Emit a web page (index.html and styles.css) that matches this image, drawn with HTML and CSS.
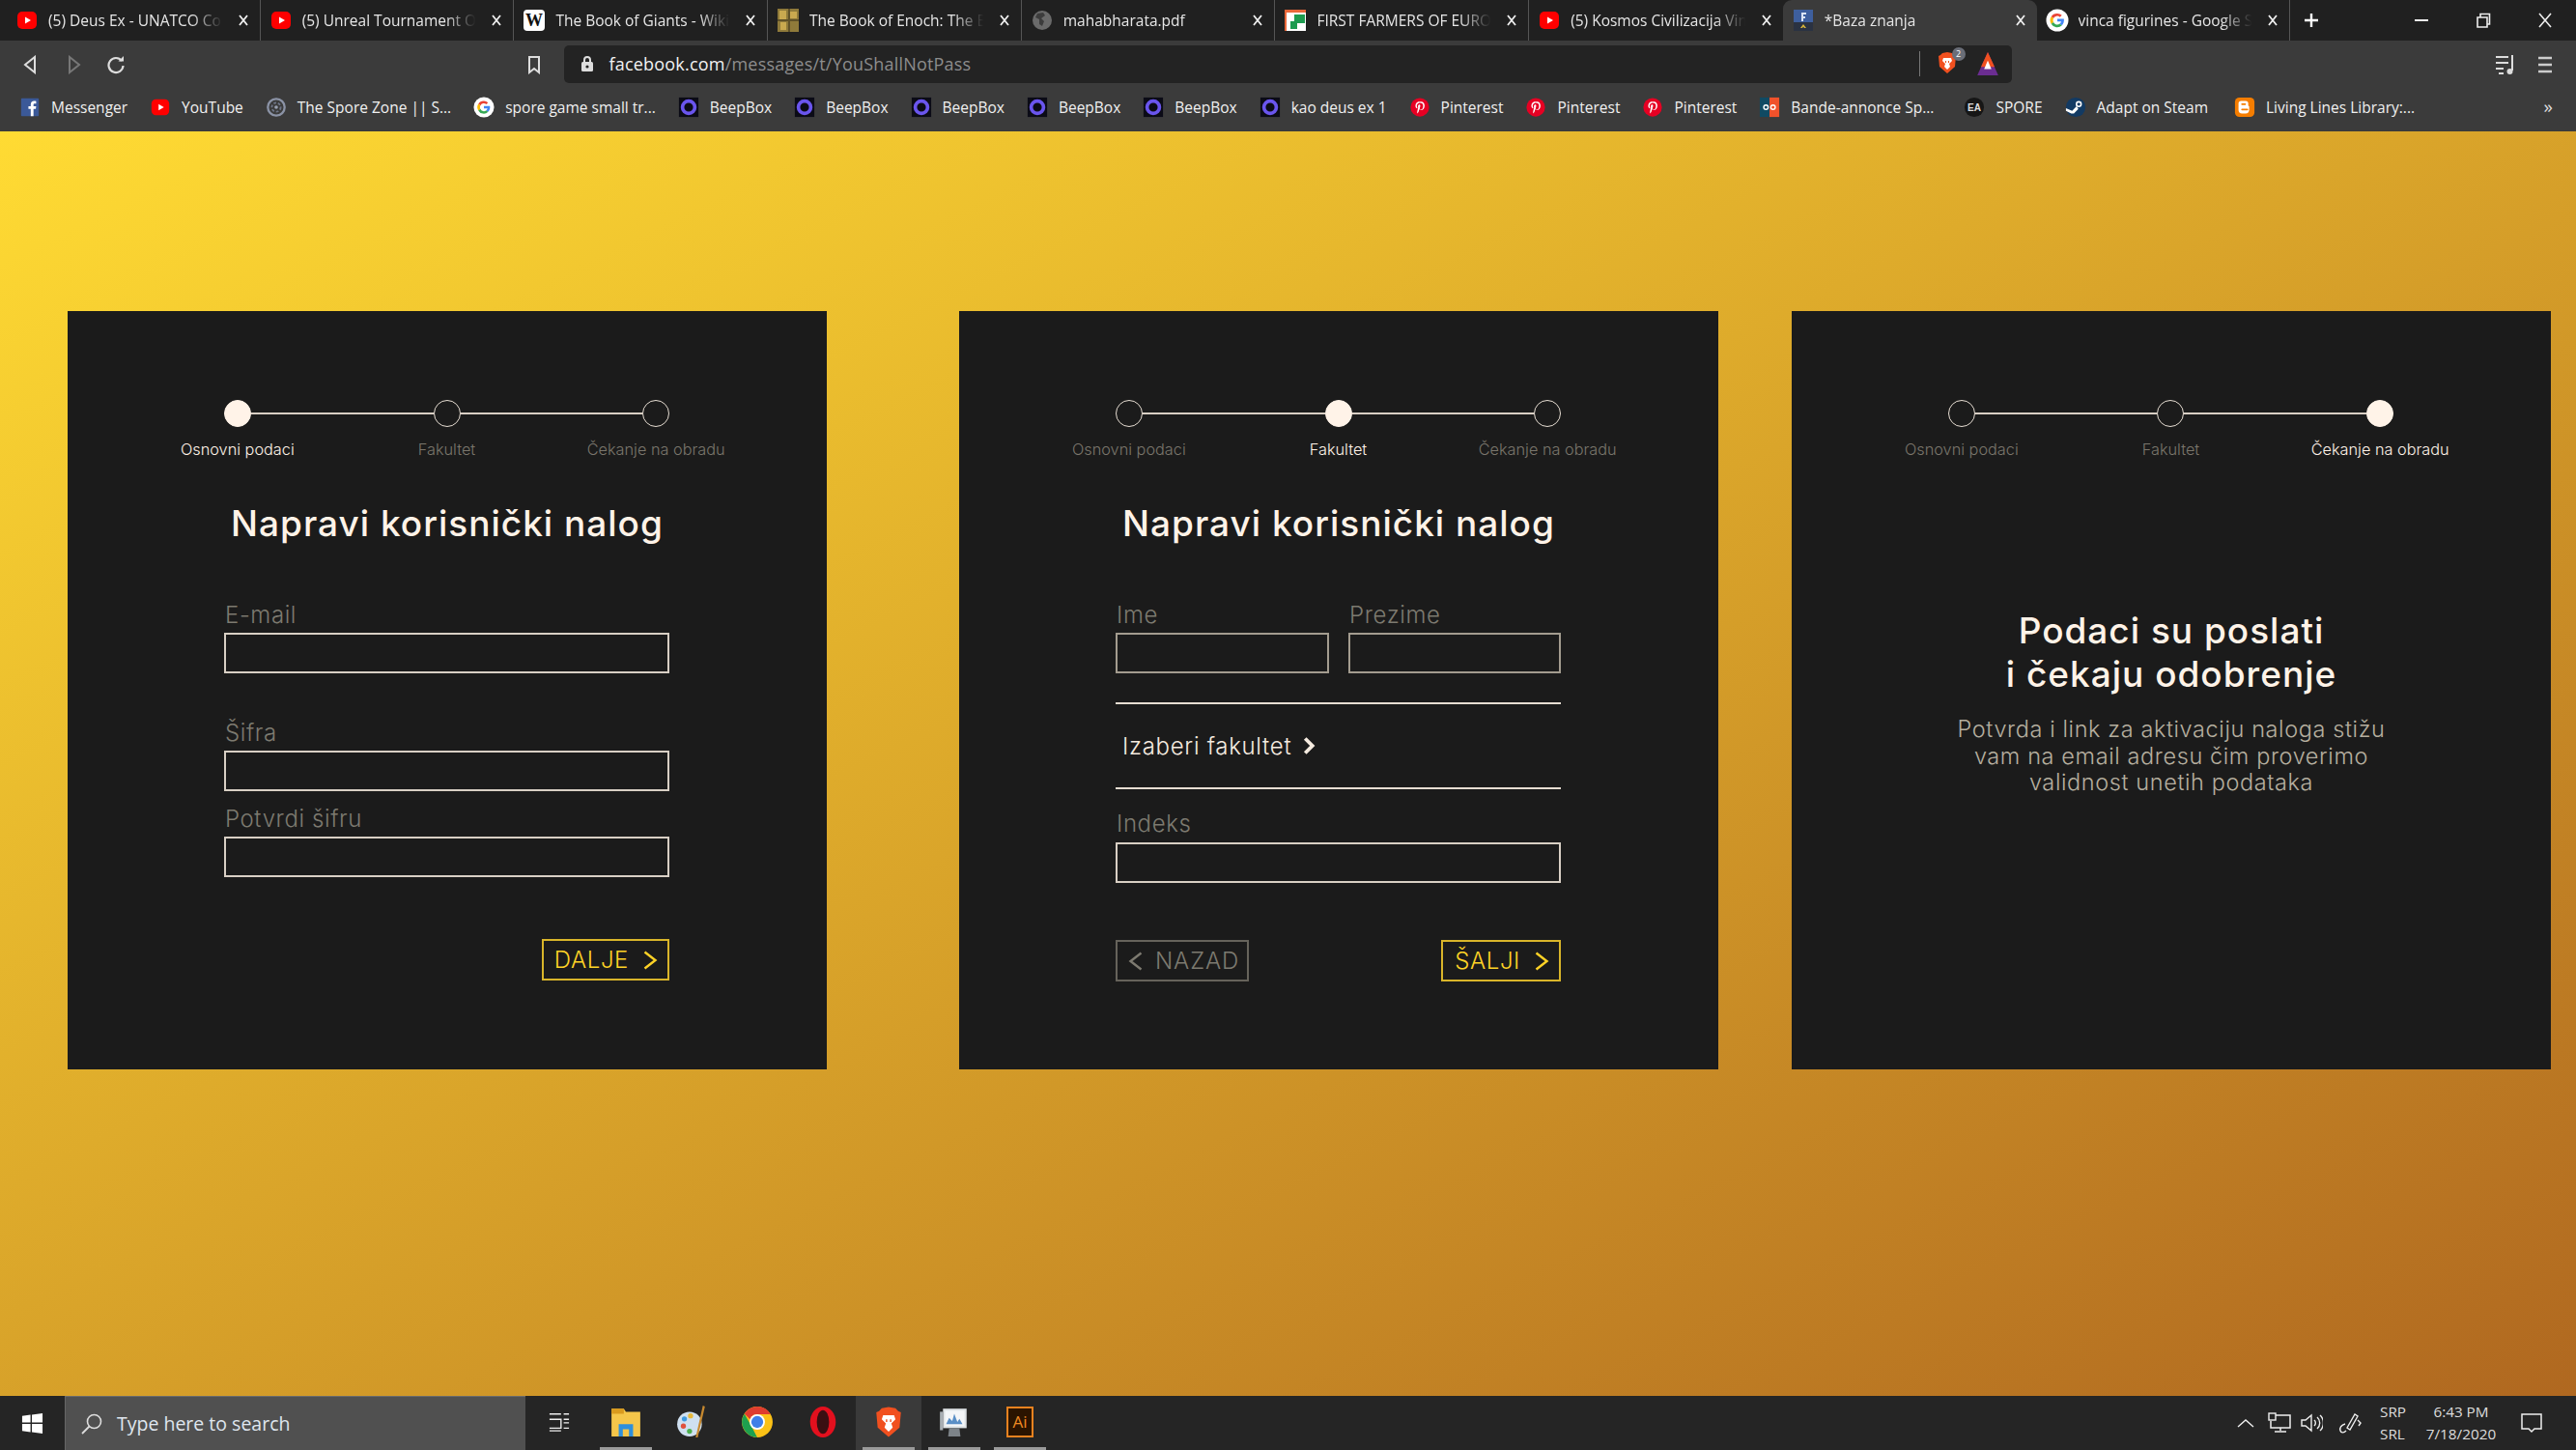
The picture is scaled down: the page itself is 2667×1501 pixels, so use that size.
FILE: index.html
```html
<!DOCTYPE html>
<html lang="sr">
<head>
<meta charset="utf-8">
<title>Baza znanja</title>
<link rel="stylesheet" href="styles.css">
</head>
<body>
<svg class="sprite" xmlns="http://www.w3.org/2000/svg">
  <symbol id="yt" viewBox="0 0 24 24"><rect x="2" y="3" width="20" height="18" rx="5" fill="#f00"/><path d="M10 8.500l6 3.500-6 3.500z" fill="#fff"/></symbol>
  <symbol id="wiki" viewBox="0 0 24 24"><rect x="1" y="1" width="22" height="22" rx="4" fill="#fff"/><text x="12" y="18" font-family="Liberation Serif" font-size="18" font-weight="700" text-anchor="middle" fill="#111">W</text></symbol>
  <symbol id="book" viewBox="0 0 24 24"><rect x="1" y="0" width="22" height="24" fill="#8f7a3a"/><path d="M3 2h7v9H3zM14 3h7v7h-7zM4 14h6v8H4z" fill="#c9a94f"/><path d="M12 0h2v24h-2zM1 11h22v2H1z" fill="#5f5128"/></symbol>
  <symbol id="globe" viewBox="0 0 24 24"><circle cx="12" cy="12" r="10" fill="#6a6a6a"/><path d="M7 5l6-1 2 3-4 3 3 3-2 5-3-2V11L5 9z" fill="#3c3c3c"/></symbol>
  <symbol id="farm" viewBox="0 0 24 24"><rect x="1" y="1" width="22" height="22" fill="#fff"/><path d="M1 1h22v3H1zM1 4h2v19H1z" fill="#e8673a"/><path d="M5 6h8v15H5z" fill="#fff"/><path d="M11 6h11v9H11zM7 13h7v8H7z" fill="#1d9b4f"/></symbol>
  <symbol id="baza" viewBox="0 0 24 24"><rect x="2" y="1" width="20" height="13" fill="#3e5f9e"/><rect x="2" y="14" width="20" height="9" fill="#2a3242"/><path d="M10 4h5v2h-3v2h2v2h-2v3h-2z" fill="#dbe4f5"/><path d="M9 20l3-4 3 4h-2l-1-1.500L11 20z" fill="#d9b53a"/></symbol>
  <symbol id="g" viewBox="0 0 24 24"><circle cx="12" cy="12" r="11.500" fill="#fff"/><path d="M12 5a7 7 0 0 1 4.700 1.800l-2 2A4.200 4.200 0 0 0 8 10L5.700 8.300A7 7 0 0 1 12 5z" fill="#ea4335"/><path d="M5.700 8.300L8 10a4.200 4.200 0 0 0 0 4l-2.300 1.700a7 7 0 0 1 0-7.400z" fill="#fbbc05"/><path d="M8 14a4.200 4.200 0 0 0 6.600 1.500l2.200 1.700A7 7 0 0 1 5.700 15.700z" fill="#34a853"/><path d="M12 10.600h6.800c.4 2.500-.3 5-2 6.600l-2.200-1.700c.8-.6 1.200-1.300 1.400-2.200h-4z" fill="#4285f4"/></symbol>
  <symbol id="fb" viewBox="0 0 24 24"><rect x="2" y="2" width="20" height="20" rx="1" fill="#3b5998"/><path d="M16 22v-8h2.600l.4-3h-3V9.200c0-.9.300-1.400 1.500-1.400H19V5.100c-.4 0-1.300-.1-2.300-.1-2.300 0-3.800 1.400-3.800 3.900V11h-2.600v3h2.600v8z" fill="#fff"/></symbol>
  <symbol id="spore" viewBox="0 0 24 24"><circle cx="12" cy="12" r="9.500" fill="none" stroke="#8b93a6" stroke-width="2.500"/><circle cx="12" cy="12" r="5" fill="none" stroke="#6d7486" stroke-width="2" stroke-dasharray="3 2"/><circle cx="12" cy="12" r="2" fill="#9aa1b2"/></symbol>
  <symbol id="beep" viewBox="0 0 24 24"><rect x="1" y="1" width="22" height="22" fill="#0b0b16"/><circle cx="12" cy="12" r="7" fill="none" stroke="#6a55ee" stroke-width="4"/></symbol>
  <symbol id="pin" viewBox="0 0 24 24"><circle cx="12" cy="12" r="10.500" fill="#e60023"/><path d="M12.500 5.500c-3.600 0-5.500 2.300-5.500 4.800 0 1.200.6 2.600 1.700 3 .3.100.4 0 .5-.5.100-.3-.1-.5-.3-.9-.9-2.100.6-4.700 3.300-4.700 2.300 0 3.500 1.400 3.500 3.300 0 2.400-1.100 4.200-2.600 4.200-.9 0-1.500-.7-1.300-1.600.3-1 .7-2.100.7-2.800 0-1.800-2.600-1.500-2.600.8 0 .7.200 1.200.2 1.200l-1 4.300c-.2.800 0 2.200 0 2.300h.4c.3-.4 1-1.700 1.300-2.600l.5-2c.3.500 1 1 1.900 1 2.500 0 4.200-2.300 4.200-5.300 0-2.800-2.300-4.500-5-4.500z" fill="#fff"/></symbol>
  <symbol id="bande" viewBox="0 0 24 24"><rect x="1" y="1" width="11" height="22" fill="#104a63"/><rect x="12" y="1" width="11" height="22" fill="#f0522b"/><circle cx="8" cy="12" r="2.500" fill="none" stroke="#fff" stroke-width="1.500"/><circle cx="16" cy="12" r="2.500" fill="none" stroke="#fff" stroke-width="1.500"/></symbol>
  <symbol id="ea" viewBox="0 0 24 24"><circle cx="12" cy="12" r="11" fill="#161616"/><text x="12" y="16" font-family="Liberation Sans" font-size="11" font-weight="700" text-anchor="middle" fill="#ddd">EA</text></symbol>
  <symbol id="steam" viewBox="0 0 24 24"><circle cx="12" cy="12" r="11" fill="#123a63"/><circle cx="15.500" cy="8.500" r="3.500" fill="#fff"/><circle cx="15.500" cy="8.500" r="1.800" fill="#123a63"/><path d="M1 13l7 3 5-5 2 3-5 5-3 0-6-3z" fill="#fff"/></symbol>
  <symbol id="blog" viewBox="0 0 24 24"><rect x="1" y="1" width="22" height="22" rx="5" fill="#f57d00"/><path d="M8 5h5a3 3 0 0 1 3 3v2a2 2 0 0 0 1 1v4a4 4 0 0 1-4 4H9a4 4 0 0 1-4-4V8a3 3 0 0 1 3-3z" fill="#fff"/><path d="M9 8.500h3.500M9 14.500h6" stroke="#f57d00" stroke-width="2" stroke-linecap="round"/></symbol>
  <symbol id="brave" viewBox="0 0 24 24"><path d="M12 1l5 1 2 2 2 1-1 11-8 7-8-7L3 5l2-1 2-2z" fill="#f1501f"/><path d="M8 7h8l1 3-3 3 1 3-3 3-3-3 1-3-3-3z" fill="#fff"/><path d="M10 10h1v2h-1zM13 10h1v2h-1z" fill="#f1501f"/></symbol>
  <symbol id="tri" viewBox="0 0 24 24"><path d="M12 1l10 22H2z" fill="#6b2d91"/><path d="M12 1l6.500 14h-13z" fill="#f1501f"/><path d="M12 9l3.500 8h-7z" fill="#fff"/></symbol>
  <symbol id="close" viewBox="0 0 14 14"><path d="M3 2l8 10M11 2L3 12" stroke="currentColor" stroke-width="1.800" fill="none"/></symbol>
  <symbol id="chev" viewBox="0 0 16 20"><path d="M2.500 1.500L13.500 10 2.500 18.500" stroke="currentColor" stroke-width="2.400" fill="none"/></symbol>
  <symbol id="chevl" viewBox="0 0 16 20"><path d="M13.500 1.500L2.500 10 13.500 18.500" stroke="currentColor" stroke-width="2.400" fill="none"/></symbol>
</svg>

<header class="chrome">
  <div class="tabstrip">
    <div class="tab"><svg class="fav"><use href="#yt"/></svg><span class="tab-title">(5) Deus Ex - UNATCO Combat</span><svg class="x"><use href="#close"/></svg></div>
    <div class="tab"><svg class="fav"><use href="#yt"/></svg><span class="tab-title">(5) Unreal Tournament OST</span><svg class="x"><use href="#close"/></svg></div>
    <div class="tab"><svg class="fav"><use href="#wiki"/></svg><span class="tab-title">The Book of Giants - Wikipedia</span><svg class="x"><use href="#close"/></svg></div>
    <div class="tab"><svg class="fav"><use href="#book"/></svg><span class="tab-title">The Book of Enoch: The Book</span><svg class="x"><use href="#close"/></svg></div>
    <div class="tab"><svg class="fav"><use href="#globe"/></svg><span class="tab-title">mahabharata.pdf</span><svg class="x"><use href="#close"/></svg></div>
    <div class="tab"><svg class="fav"><use href="#farm"/></svg><span class="tab-title">FIRST FARMERS OF EUROPE</span><svg class="x"><use href="#close"/></svg></div>
    <div class="tab tab-pre"><svg class="fav"><use href="#yt"/></svg><span class="tab-title">(5) Kosmos Civilizacija Vinča</span><svg class="x"><use href="#close"/></svg></div>
    <div class="tab tab-active"><svg class="fav"><use href="#baza"/></svg><span class="tab-title">*Baza znanja</span><svg class="x"><use href="#close"/></svg></div>
    <div class="tab"><svg class="fav"><use href="#g"/></svg><span class="tab-title">vinca figurines - Google Search</span><svg class="x"><use href="#close"/></svg></div>
    <svg class="newtab" viewBox="0 0 18 18"><path d="M9 2v14M2 9h14" stroke="#fff" stroke-width="2.400"/></svg>
    <div class="winctl">
      <svg class="wc" viewBox="0 0 18 18"><path d="M2 9h14" stroke="#eee" stroke-width="2"/></svg>
      <svg class="wc" viewBox="0 0 18 18"><path d="M3 6h10v10H3zM6 6V2.500h9.500V13H13" stroke="#eee" stroke-width="1.600" fill="none"/></svg>
      <svg class="wc" viewBox="0 0 18 18"><path d="M3 2l12 14M15 2L3 16" stroke="#eee" stroke-width="1.600" fill="none"/></svg>
    </div>
  </div>
  <div class="toolbar">
    <div class="nav">
      <svg class="nav-ico" viewBox="0 0 20 20"><path d="M14 2v16L4 10z" fill="none" stroke="#ddd" stroke-width="2"/></svg>
      <svg class="nav-ico" viewBox="0 0 20 20"><path d="M6 2v16l10-8z" fill="none" stroke="#777" stroke-width="2"/></svg>
      <svg class="nav-ico" viewBox="0 0 20 20"><path d="M16 6a7.500 7.500 0 1 0 1.500 5" fill="none" stroke="#ddd" stroke-width="2.200"/><path d="M12.500 6.500H18V1z" fill="#ddd"/></svg>
    </div>
    <svg class="bm-ico" viewBox="0 0 16 20"><path d="M3 2h10v16l-5-4-5 4z" fill="none" stroke="#ddd" stroke-width="2"/></svg>
    <div class="omni">
      <svg class="lock" viewBox="0 0 16 20"><path d="M5 9V6a3 3 0 0 1 6 0v3" fill="none" stroke="#ddd" stroke-width="2"/><rect x="2" y="8" width="12" height="10" rx="1.500" fill="#ddd"/><circle cx="8" cy="13" r="1.600" fill="#232323"/></svg>
      <span class="url"><b class="url-host">facebook.com</b>/messages/t/YouShallNotPass</span>
      <i class="omni-sep"></i>
      <span class="shield"><svg class="shield-ico"><use href="#brave"/></svg><b class="shield-badge">2</b></span>
      <svg class="tri-ico"><use href="#tri"/></svg>
    </div>
    <div class="tool-right">
      <svg class="tr-ico" viewBox="0 0 24 24"><path d="M3 4h13M3 10h13M3 16h8M6 21h5" stroke="#ddd" stroke-width="2"/><path d="M20 2v16" stroke="#ddd" stroke-width="2"/><circle cx="17.500" cy="19" r="3" fill="#ddd"/></svg>
      <svg class="tr-ico" viewBox="0 0 24 24"><path d="M5 5h14M5 12h14M5 19h14" stroke="#ccc" stroke-width="2.600"/></svg>
    </div>
  </div>
  <nav class="bookmarks">
    <a class="bm"><svg class="bm-fav"><use href="#fb"/></svg>Messenger</a>
    <a class="bm"><svg class="bm-fav"><use href="#yt"/></svg>YouTube</a>
    <a class="bm"><svg class="bm-fav"><use href="#spore"/></svg>The Spore Zone || S...</a>
    <a class="bm"><svg class="bm-fav"><use href="#g"/></svg>spore game small tr...</a>
    <a class="bm"><svg class="bm-fav"><use href="#beep"/></svg>BeepBox</a>
    <a class="bm"><svg class="bm-fav"><use href="#beep"/></svg>BeepBox</a>
    <a class="bm"><svg class="bm-fav"><use href="#beep"/></svg>BeepBox</a>
    <a class="bm"><svg class="bm-fav"><use href="#beep"/></svg>BeepBox</a>
    <a class="bm"><svg class="bm-fav"><use href="#beep"/></svg>BeepBox</a>
    <a class="bm"><svg class="bm-fav"><use href="#beep"/></svg>kao deus ex 1</a>
    <a class="bm"><svg class="bm-fav"><use href="#pin"/></svg>Pinterest</a>
    <a class="bm"><svg class="bm-fav"><use href="#pin"/></svg>Pinterest</a>
    <a class="bm"><svg class="bm-fav"><use href="#pin"/></svg>Pinterest</a>
    <a class="bm"><svg class="bm-fav"><use href="#bande"/></svg>Bande-annonce Sp...</a>
    <a class="bm bm-after-long"><svg class="bm-fav"><use href="#ea"/></svg>SPORE</a>
    <a class="bm"><svg class="bm-fav"><use href="#steam"/></svg>Adapt on Steam</a>
    <a class="bm bm-after-steam"><svg class="bm-fav"><use href="#blog"/></svg>Living Lines Library:...</a>
    <span class="bm-more">»</span>
  </nav>
</header>

<main class="stage">
  <section class="card">
    <div class="track"><i class="dot dot-on"></i><i class="seg"></i><i class="dot"></i><i class="seg"></i><i class="dot"></i></div>
    <div class="steps"><span class="step step-on">Osnovni podaci</span><span class="step">Fakultet</span><span class="step">Čekanje na obradu</span></div>
    <h1 class="title">Napravi korisnički nalog</h1>
    <form class="form">
      <label class="field"><span class="lbl">E-mail</span><span class="inp"></span></label>
      <label class="field field-far"><span class="lbl">Šifra</span><span class="inp"></span></label>
      <label class="field field-near"><span class="lbl">Potvrdi šifru</span><span class="inp"></span></label>
      <div class="actions actions-end"><span class="btn btn-go">DALJE<svg class="chev"><use href="#chev"/></svg></span></div>
    </form>
  </section>

  <section class="card card-second">
    <div class="track"><i class="dot"></i><i class="seg"></i><i class="dot dot-on"></i><i class="seg"></i><i class="dot"></i></div>
    <div class="steps"><span class="step">Osnovni podaci</span><span class="step step-on">Fakultet</span><span class="step">Čekanje na obradu</span></div>
    <h1 class="title">Napravi korisnički nalog</h1>
    <form class="form">
      <div class="pair">
        <label class="field"><span class="lbl">Ime</span><span class="inp inp-dim"></span></label>
        <label class="field"><span class="lbl">Prezime</span><span class="inp inp-dim"></span></label>
      </div>
      <div class="picker"><span>Izaberi fakultet</span><svg class="picker-chev" viewBox="0 0 12 16"><path d="M3 2l6 6-6 6" fill="none" stroke="currentColor" stroke-width="3"/></svg></div>
      <label class="field field-idx"><span class="lbl">Indeks</span><span class="inp"></span></label>
      <div class="actions actions-idx"><span class="btn btn-back"><svg class="chev"><use href="#chevl"/></svg>NAZAD</span><span class="btn btn-send">ŠALJI<svg class="chev"><use href="#chev"/></svg></span></div>
    </form>
  </section>

  <section class="card card-third">
    <div class="track"><i class="dot"></i><i class="seg"></i><i class="dot"></i><i class="seg"></i><i class="dot dot-on"></i></div>
    <div class="steps"><span class="step">Osnovni podaci</span><span class="step">Fakultet</span><span class="step step-on">Čekanje na obradu</span></div>
    <h1 class="title title-done">Podaci su poslati<br>i čekaju odobrenje</h1>
    <p class="note">Potvrda i link za aktivaciju naloga stižu<br>vam na email adresu čim proverimo<br>validnost unetih podataka</p>
  </section>
</main>

<footer class="taskbar">
  <div class="start"><svg class="win" viewBox="0 0 24 24"><path d="M1 4l9-1.300V11H1zM11.500 2.500L23 1v10H11.500zM1 12.500h9v8.800L1 20zM11.500 12.500H23V23l-11.500-1.600z" fill="#fff"/></svg></div>
  <div class="search"><svg class="mag" viewBox="0 0 24 24"><circle cx="14.500" cy="9.500" r="7" fill="none" stroke="#ddd" stroke-width="1.600"/><path d="M9.500 14.500L2 22" stroke="#ddd" stroke-width="1.800"/></svg><span>Type here to search</span></div>
  <div class="task task-view"><svg class="tv" viewBox="0 0 24 24"><path d="M1 3h13M17 3h6M1 9h13v10H1M17 9h6M17 13h6M17 19h6M1 22h13" stroke="#eee" stroke-width="1.500" fill="none"/></svg></div>
  <div class="task task-run"><svg class="app" viewBox="0 0 32 32"><path d="M2 3h12l2 3h14v24H2z" fill="#f5c64a"/><path d="M2 3h12v5H2z" fill="#d99a1e"/><path d="M9 30V18h14v12h-4v-7h-6v7z" fill="#2f8fdb"/></svg></div>
  <div class="task"><svg class="app" viewBox="0 0 32 32"><ellipse cx="14" cy="18" rx="12" ry="12" fill="#cfe0f0"/><circle cx="9" cy="13" r="2.500" fill="#3f9ae0"/><circle cx="15" cy="10" r="2.500" fill="#e7b93b"/><circle cx="8" cy="20" r="2.500" fill="#e0513e"/><circle cx="14" cy="25" r="2.500" fill="#4bb04d"/><path d="M27 0l2 1-7 30h-2z" fill="#c7892f"/></svg></div>
  <div class="task"><svg class="app" viewBox="0 0 32 32"><circle cx="16" cy="16" r="15" fill="#fbc116"/><path d="M16 1a15 15 0 0 1 13 7.500H16a7.500 7.500 0 0 0-7 4.800L3.500 8A15 15 0 0 1 16 1z" fill="#df3d2f"/><path d="M3.500 8l6.500 11.500L16 31A15 15 0 0 1 3.500 8z" fill="#1ea04f"/><circle cx="16" cy="16" r="7.500" fill="#fff"/><circle cx="16" cy="16" r="5.800" fill="#3f7fe8"/></svg></div>
  <div class="task"><svg class="app" viewBox="0 0 32 32"><ellipse cx="16" cy="16" rx="12.500" ry="15" fill="#e3101e"/><ellipse cx="16" cy="16" rx="6" ry="11.500" fill="#3a0f12"/></svg></div>
  <div class="task task-run task-on"><svg class="app" viewBox="0 0 24 24"><use href="#brave"/></svg></div>
  <div class="task task-run"><svg class="app" viewBox="0 0 32 32"><rect x="5" y="3" width="23" height="19" fill="#dfe3e6"/><rect x="7" y="5" width="19" height="15" fill="#f4f6f8"/><path d="M8 18l3-6 3 3 2-7 3 8 2-3 3 5z" fill="#5a8fc6"/><path d="M2 6h3v18H2z" fill="#a9afb4"/><path d="M11 22h10l1 8H10z" fill="#7d8388"/></svg></div>
  <div class="task task-run"><div class="ai">Ai</div></div>
  <div class="tray">
    <svg class="caret" viewBox="0 0 18 10"><path d="M1 9l8-7 8 7" fill="none" stroke="#eee" stroke-width="1.400"/></svg>
    <svg class="tray-ico" viewBox="0 0 24 22"><path d="M5 3h18v13H3V9M13 16v3M7 20h12" fill="none" stroke="#eee" stroke-width="1.500"/><rect x="1" y="1" width="7" height="7" fill="#262626" stroke="#eee" stroke-width="1.400"/></svg>
    <svg class="tray-ico" viewBox="0 0 24 22"><path d="M2 8h4l6-5v16l-6-5H2zM15 8a4 4 0 0 1 0 6M18 5a8 8 0 0 1 0 12M21 3a11 11 0 0 1 0 16" fill="none" stroke="#eee" stroke-width="1.400"/></svg>
    <svg class="tray-ico tray-pen" viewBox="0 0 24 22"><path d="M9 16l8-14 3 2-8 14zM20 8l3 3-2 3M7 12c-4 1-6 4-5 7s4 2 6 0" fill="none" stroke="#eee" stroke-width="1.400"/></svg>
    <div class="lang"><span>SRP</span><span>SRL</span></div>
    <div class="clock"><span>6:43 PM</span><span>7/18/2020</span></div>
    <svg class="notif" viewBox="0 0 24 22"><path d="M2 2h20v15h-7l-3 3-3-3H2z" fill="none" stroke="#eee" stroke-width="1.500"/></svg>
  </div>
</footer>
</body>
</html>
```
FILE: styles.css
```css
* { box-sizing: border-box; }
html, body { margin: 0; height: 100%; }
body {
  width: 2667px;
  height: 1501px;
  overflow: hidden;
  display: flex;
  flex-direction: column;
  font-family: "Open Sans", "Noto Sans", sans-serif;
  background: #222;
}
.sprite { display: none; }

/* browser chrome */
.chrome { flex: none; height: 136px; background: #3b3b3b; color: #eee; }
.tabstrip { display: flex; align-items: stretch; height: 42px; padding-left: 7px; background: #202020; }
.tab {
  flex: none; width: 262.7px; display: flex; align-items: center;
  padding: 0 10px 0 9px; border-right: 1px solid #555;
  background: #202020;
}
.tab-active { background: #3b3b3b; border-right: 0; border-radius: 9px 9px 0 0; }
.tab-pre { border-right: 0; }
.fav { flex: none; width: 24px; height: 24px; margin-right: 10px; }
.tab-title {
  flex: 1; min-width: 0; white-space: nowrap; overflow: hidden; font-size: 15.5px; color: #e6e6e6;
  -webkit-mask-image: linear-gradient(to right, #000 80%, transparent 97%);
  mask-image: linear-gradient(to right, #000 80%, transparent 97%);
}
.x { flex: none; width: 14px; height: 14px; margin: 0 0 0 9px; color: #f0f0f0; }
.newtab { width: 18px; height: 18px; align-self: center; margin-left: 13px; }
.winctl { margin-left: auto; display: flex; align-items: center; gap: 46px; padding-right: 23px; }
.wc { width: 18px; height: 18px; }

.toolbar { display: flex; align-items: center; height: 49px; padding-left: 22px; }
.nav { display: flex; gap: 24px; width: 530px; }
.nav-ico { width: 20px; height: 20px; }
.bm-ico { width: 16px; height: 20px; flex: none; margin-left: -7px; margin-right: 22.500px; }
.omni {
  width: 1499px; height: 39px; display: flex; align-items: center; background: #232323;
  border-radius: 5px; padding-left: 16px; flex: none; margin-bottom: 1px;
}
.lock { width: 16px; height: 20px; flex: none; margin-right: 15px; }
.url { font-size: 18px; color: #8d8d8d; white-space: nowrap; letter-spacing: .2px; }
.url-host { font-weight: 400; color: #f2f2f2; }
.omni-sep { width: 1px; height: 26px; background: #777; margin-left: auto; margin-right: 3px; }
.shield { position: relative; display: block; width: 26px; height: 30px; margin-left: 13px; }
.shield-ico { width: 24px; height: 28px; }
.shield-badge {
  position: absolute; left: 17px; top: -2px; width: 14px; height: 14px; border-radius: 50%;
  background: #6a6e78; font: 400 9px/14px "Open Sans", sans-serif; text-align: center; color: #fff;
}
.tri-ico { width: 26px; height: 26px; margin-left: 15px; margin-right: 12px; flex: none; }
.tool-right { margin-left: auto; display: flex; gap: 18px; padding-right: 20px; }
.tr-ico { width: 24px; height: 24px; }

.bookmarks { display: flex; align-items: center; height: 45px; padding: 0 0 5px 20px; gap: 23px; position: relative; }
.bm { display: flex; align-items: center; flex: none; font-size: 15.5px; color: #f0f0f0; white-space: nowrap; }
.bm-after-long { margin-left: 8px; }
.bm-after-steam { margin-left: 4px; }
.bm-fav { width: 22px; height: 22px; margin-right: 11px; flex: none; }
.bm-more { position: absolute; right: 24px; top: 6px; font-size: 19px; color: #ddd; }

/* page */
.stage {
  flex: 1; min-height: 0; display: flex; align-items: flex-start;
  padding: 186px 0 0 70px;
  background: linear-gradient(to bottom right, #ffdb33, #b06820);
}
.card {
  flex: none; width: 786px; height: 785px; background: #1b1b1b;
  display: flex; flex-direction: column; align-items: center;
  padding-top: 92px;
  font-family: Inter, "Noto Sans", sans-serif; font-weight: 300; color: #fff3e8;
}
.card-second { margin-left: 137px; }
.card-third { margin-left: 76px; }

.track { width: 461px; height: 28px; display: flex; align-items: center; margin-right: 1px; }
.card-third .track { margin-right: 2px; }
.dot { flex: none; width: 28px; height: 28px; border-radius: 50%; border: 1px solid #e6ddd2; }
.dot-on { background: #fff3e8; border-color: #fff3e8; }
.seg { flex: 1; height: 2px; background: #d8cfc4; }
.steps { width: 650px; display: grid; grid-template-columns: repeat(3, 1fr); margin-top: 12px; margin-right: 1px; }
.step { text-align: center; font-size: 16.3px; line-height: 22px; color: #7a766c; white-space: nowrap; }
.step-on { color: #fff3e8; }
.title { margin: 44px 0 0; font-size: 37px; line-height: 44px; font-weight: 500; color: #fff3e8; text-align: center; white-space: nowrap; letter-spacing: 1px; }
.title-done { margin-top: 155px; line-height: 44.5px; }
.note { margin: 21px 0 0; font-size: 23.5px; line-height: 27.5px; color: #b5ae9f; text-align: center; white-space: nowrap; letter-spacing: .6px; }

.form { width: 461px; margin: 61px 1px 0 0; display: flex; flex-direction: column; }
.field { display: flex; flex-direction: column; gap: 6px; }
.field-far { margin-top: 50px; }
.field-near { margin-top: 17px; }
.lbl { font-size: 24px; line-height: 24px; color: #7d7a70; padding-left: 1px; letter-spacing: .6px; }
.inp { display: block; height: 42px; border: 2px solid #d8cfc4; }
.inp-dim { border-color: #a39c8f; }
.pair { display: grid; grid-template-columns: 221px 220px; column-gap: 20px; }
.picker {
  margin-top: 30px; height: 90px; border-top: 2px solid #e6ddd2; border-bottom: 2px solid #e6ddd2;
  display: flex; align-items: center; gap: 10px; padding: 0 0 0 7px; font-size: 24px; letter-spacing: .7px; color: #f5ebe0;
}
.picker-chev { width: 16px; height: 20px; }
.field-idx { margin-top: 24px; }
.field-idx .inp { margin-top: 1px; }
.actions { display: flex; }
.actions-end { margin-top: 64px; justify-content: flex-end; }
.actions-idx { margin-top: 59px; justify-content: space-between; }
.btn {
  height: 43px; display: flex; align-items: center; gap: 14px; border: 2px solid #d9b52a;
  color: #ffd326; font-size: 24px; padding: 0 10px 0 11px; letter-spacing: .6px;
}
.btn-send { padding-left: 12px; }
.btn-back { border-color: #66635b; color: #7d7a70; padding: 0 8px 0 11px; gap: 12px; letter-spacing: .9px; }
.chev { width: 16px; height: 20px; }

/* taskbar */
.taskbar { flex: none; height: 56px; display: flex; align-items: stretch; background: #252525; color: #eee; }
.start { flex: none; width: 67px; display: flex; align-items: center; justify-content: center; }
.win { width: 23px; height: 23px; }
.search {
  flex: none; width: 477px; display: flex; align-items: center; background: #505050;
  border-top: 1px solid #6a6a6a; border-left: 1px solid #666; font-size: 19.5px; color: #dfe6ee; padding-left: 15px;
}
.mag { width: 24px; height: 24px; margin-right: 14px; }
.task { position: relative; flex: none; width: 68px; display: flex; align-items: center; justify-content: center; padding-bottom: 2px; }
.task-view { width: 70px; }
.task-run::after { content: ""; position: absolute; left: 7px; right: 7px; bottom: 0; height: 3px; background: #9a9a9a; }
.task-on { background: #3a3a3a; }
.tv { width: 22px; height: 24px; }
.app { width: 34px; height: 34px; }
.ai {
  width: 28px; height: 32px; background: #2b1400; border: 2px solid #e8821f; color: #ef8a22;
  font: 400 17px/28px "Open Sans", sans-serif; text-align: center;
}
.tray { margin-left: auto; display: flex; align-items: center; padding-right: 28px; }
.caret { width: 18px; height: 10px; margin-right: 14px; }
.tray-ico { width: 24px; height: 22px; margin-right: 9px; }
.tray-pen { margin-left: 7px; margin-right: 19px; }
.lang, .clock { display: flex; flex-direction: column; font-size: 15.3px; line-height: 23px; color: #ddd; }
.lang { width: 31px; }
.clock { width: 104px; align-items: center; margin-left: 1px; }
.notif { width: 24px; height: 22px; margin-left: 9px; margin-right: 6px; }
```
